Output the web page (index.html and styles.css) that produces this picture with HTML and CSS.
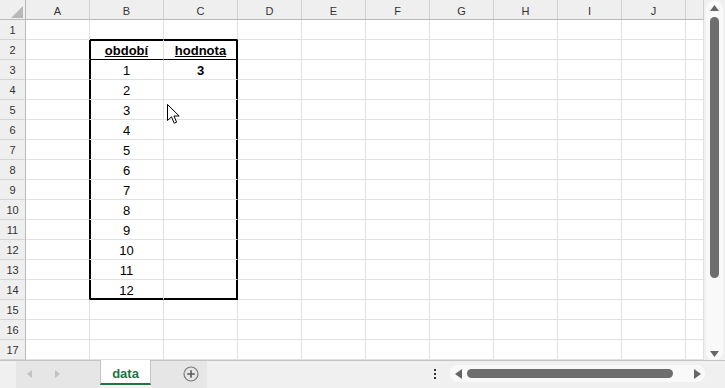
FILE: index.html
```html
<!DOCTYPE html>
<html lang="cs">
<head>
<meta charset="utf-8">
<title>data</title>
<link rel="stylesheet" href="styles.css">
</head>
<body>
<div class="app">
  <div class="main">
    <div class="sheet">
      <div class="corner"><span class="tri"></span></div><div class="ch">A</div><div class="ch">B</div><div class="ch">C</div><div class="ch">D</div><div class="ch">E</div><div class="ch">F</div><div class="ch">G</div><div class="ch">H</div><div class="ch">I</div><div class="ch">J</div><div class="ch"></div>
      <div class="rh">1</div><div class="c"></div><div class="c above"></div><div class="c above"></div><div class="c"></div><div class="c"></div><div class="c"></div><div class="c"></div><div class="c"></div><div class="c"></div><div class="c"></div><div class="c"></div>
      <div class="rh">2</div><div class="c lft"></div><div class="c hd tl">období</div><div class="c hd tr">hodnota</div><div class="c"></div><div class="c"></div><div class="c"></div><div class="c"></div><div class="c"></div><div class="c"></div><div class="c"></div><div class="c"></div>
      <div class="rh">3</div><div class="c lft"></div><div class="c l">1</div><div class="c r strong">3</div><div class="c"></div><div class="c"></div><div class="c"></div><div class="c"></div><div class="c"></div><div class="c"></div><div class="c"></div><div class="c"></div>
      <div class="rh">4</div><div class="c lft"></div><div class="c l">2</div><div class="c r"></div><div class="c"></div><div class="c"></div><div class="c"></div><div class="c"></div><div class="c"></div><div class="c"></div><div class="c"></div><div class="c"></div>
      <div class="rh">5</div><div class="c lft"></div><div class="c l">3</div><div class="c r"></div><div class="c"></div><div class="c"></div><div class="c"></div><div class="c"></div><div class="c"></div><div class="c"></div><div class="c"></div><div class="c"></div>
      <div class="rh">6</div><div class="c lft"></div><div class="c l">4</div><div class="c r"></div><div class="c"></div><div class="c"></div><div class="c"></div><div class="c"></div><div class="c"></div><div class="c"></div><div class="c"></div><div class="c"></div>
      <div class="rh">7</div><div class="c lft"></div><div class="c l">5</div><div class="c r"></div><div class="c"></div><div class="c"></div><div class="c"></div><div class="c"></div><div class="c"></div><div class="c"></div><div class="c"></div><div class="c"></div>
      <div class="rh">8</div><div class="c lft"></div><div class="c l">6</div><div class="c r"></div><div class="c"></div><div class="c"></div><div class="c"></div><div class="c"></div><div class="c"></div><div class="c"></div><div class="c"></div><div class="c"></div>
      <div class="rh">9</div><div class="c lft"></div><div class="c l">7</div><div class="c r"></div><div class="c"></div><div class="c"></div><div class="c"></div><div class="c"></div><div class="c"></div><div class="c"></div><div class="c"></div><div class="c"></div>
      <div class="rh">10</div><div class="c lft"></div><div class="c l">8</div><div class="c r"></div><div class="c"></div><div class="c"></div><div class="c"></div><div class="c"></div><div class="c"></div><div class="c"></div><div class="c"></div><div class="c"></div>
      <div class="rh">11</div><div class="c lft"></div><div class="c l">9</div><div class="c r"></div><div class="c"></div><div class="c"></div><div class="c"></div><div class="c"></div><div class="c"></div><div class="c"></div><div class="c"></div><div class="c"></div>
      <div class="rh">12</div><div class="c lft"></div><div class="c l">10</div><div class="c r"></div><div class="c"></div><div class="c"></div><div class="c"></div><div class="c"></div><div class="c"></div><div class="c"></div><div class="c"></div><div class="c"></div>
      <div class="rh">13</div><div class="c lft"></div><div class="c l">11</div><div class="c r"></div><div class="c"></div><div class="c"></div><div class="c"></div><div class="c"></div><div class="c"></div><div class="c"></div><div class="c"></div><div class="c"></div>
      <div class="rh">14</div><div class="c lft"></div><div class="c bl">12</div><div class="c br"></div><div class="c"></div><div class="c"></div><div class="c"></div><div class="c"></div><div class="c"></div><div class="c"></div><div class="c"></div><div class="c"></div>
      <div class="rh">15</div><div class="c"></div><div class="c"></div><div class="c"></div><div class="c"></div><div class="c"></div><div class="c"></div><div class="c"></div><div class="c"></div><div class="c"></div><div class="c"></div><div class="c"></div>
      <div class="rh">16</div><div class="c"></div><div class="c"></div><div class="c"></div><div class="c"></div><div class="c"></div><div class="c"></div><div class="c"></div><div class="c"></div><div class="c"></div><div class="c"></div><div class="c"></div>
      <div class="rh">17</div><div class="c"></div><div class="c"></div><div class="c"></div><div class="c"></div><div class="c"></div><div class="c"></div><div class="c"></div><div class="c"></div><div class="c"></div><div class="c"></div><div class="c"></div>
      <svg class="cursor" width="14" height="21" viewBox="0 0 14 21"><path d="M0.5 0.5 L0.5 16.5 L4.5 12.8 L7.2 19.2 L9.6 18.2 L7 12 L12.2 12 Z" fill="#fff" stroke="#000" stroke-width="1" stroke-linejoin="miter"/></svg>
    </div>
    <div class="vscroll">
      <div class="vtrack">
        <svg class="arrow" width="9" height="6" viewBox="0 0 9 6"><polygon points="4.5,0 9,6 0,6" fill="#666"/></svg>
        <div class="vthumb"></div>
        <div class="grow"></div>
        <svg class="arrow" width="9" height="6" viewBox="0 0 9 6"><polygon points="0,0 9,0 4.5,6" fill="#666"/></svg>
      </div>
    </div>
  </div>
  <div class="bar">
    <div class="lead"></div>
    <div class="nav">
      <svg width="5" height="8" viewBox="0 0 5 8"><polygon points="5,0 5,8 0,4" fill="#c2c2c2"/></svg>
      <svg width="5" height="8" viewBox="0 0 5 8"><polygon points="0,0 5,4 0,8" fill="#c2c2c2"/></svg>
    </div>
    <div class="tab">data</div>
    <div class="add">
      <svg width="16" height="16" viewBox="0 0 16 16"><circle cx="8" cy="8" r="7" fill="none" stroke="#7a7a7a" stroke-width="1.2"/><path d="M8 4.2 V11.8 M4.2 8 H11.8" stroke="#5a5a5a" stroke-width="1.6"/></svg>
    </div>
    <div class="rest">
      <div class="grow"></div>
      <div class="dots"><span class="dot"></span><span class="dot"></span><span class="dot"></span></div>
      <div class="htrack">
        <svg width="7" height="10" viewBox="0 0 7 10"><polygon points="7,0 7,10 0,5" fill="#666"/></svg>
        <div class="hthumb"></div>
        <div class="grow"></div>
        <svg width="7" height="10" viewBox="0 0 7 10"><polygon points="0,0 7,5 0,10" fill="#666"/></svg>
      </div>
    </div>
  </div>
</div>
</body>
</html>
```
FILE: styles.css
```css
* { box-sizing: border-box; }
html, body { margin: 0; padding: 0; background: #fff; }
body { font-family: "Liberation Sans", Arial, sans-serif; }

.app { width: 725px; height: 388px; display: flex; flex-direction: column; overflow: hidden; }
.main { display: flex; height: 360px; }

.sheet {
  position: relative;
  width: 704px;
  display: grid;
  grid-template-columns: 26px 64px 74px 74px repeat(7, 64px) 18px;
  grid-template-rows: repeat(18, 20px);
  background: #fff;
}

.c {
  border-right: 1px solid #e1e1e1;
  border-bottom: 1px solid #e1e1e1;
  display: flex;
  align-items: center;
  justify-content: center;
  font-size: 13px;
  color: #000;
  padding-top: 1px;
}

.corner, .ch, .rh {
  background: #efefef;
  color: #333;
  font-size: 11px;
  display: flex;
  align-items: center;
  justify-content: center;
}
.corner {
  position: relative;
  border-right: 1px solid #b8b8b8;
  border-bottom: 1px solid #b8b8b8;
}
.tri {
  width: 0; height: 0;
  border-left: 12px solid transparent;
  border-bottom: 12px solid #b8b8b8;
  margin: 5px 0 0 8px;
}
.ch {
  border-right: 1px solid #d0d0d0;
  border-bottom: 1px solid #b8b8b8;
  padding-top: 2px;
}
.rh {
  border-right: 1px solid #b8b8b8;
  border-bottom: 1px solid #d4d4d4;
  padding-top: 1px;
}

/* bordered table range B2:C14 */
.above { border-bottom-color: #000; }
.lft { border-right-color: #000; }
.hd { font-weight: bold; text-decoration: underline; border-bottom-color: #000; }
.strong { font-weight: bold; }
.tl { box-shadow: inset 1px 0 0 #000, inset 0 1px 0 #000; }
.tr { box-shadow: inset -1px 0 0 #000, inset 0 1px 0 #000; border-right-color: #000; }
.l { box-shadow: inset 1px 0 0 #000; }
.r { box-shadow: inset -1px 0 0 #000; border-right-color: #000; }
.bl { box-shadow: inset 1px 0 0 #000, inset 0 -1px 0 #000; border-bottom-color: #000; }
.br { box-shadow: inset -1px 0 0 #000, inset 0 -1px 0 #000; border-right-color: #000; border-bottom-color: #000; }

.cursor { position: absolute; left: 167px; top: 104px; }

.vscroll {
  width: 21px;
  background: #f0f0f0;
  display: flex;
  padding: 1px 2px 0 2px;
}
.vtrack {
  flex: 1;
  background: #f9f9f9;
  border-radius: 8px 8px 8px 8px;
  display: flex;
  flex-direction: column;
  align-items: center;
  padding: 4px 0 3px 0;
}
.vthumb {
  width: 9px;
  height: 261px;
  margin-top: 6px;
  background: #6e6e6e;
  border-radius: 5px;
}
.grow { flex: 1; }

.bar {
  height: 28px;
  display: flex;
  background: #f0f0f0;
}
.lead { width: 16px; border-top: 1px solid #c4c4c4; }
.nav {
  width: 84px;
  background: #e6e6e6;
  border-top: 1px solid #c4c4c4;
  display: flex;
  align-items: center;
  padding: 0 0 2px 11px;
  gap: 23px;
}
.tab {
  width: 51px;
  height: 25px;
  background: #fff;
  border-left: 1px solid #c4c4c4;
  border-right: 1px solid #c4c4c4;
  border-bottom: 2px solid #217346;
  color: #217346;
  font-weight: bold;
  font-size: 13px;
  display: flex;
  align-items: center;
  justify-content: center;
  padding-top: 3px;
}
.add {
  width: 56px;
  background: #e6e6e6;
  border-top: 1px solid #c4c4c4;
  display: flex;
  align-items: center;
  padding: 0 0 1px 32px;
}
.rest {
  flex: 1;
  display: flex;
  align-items: center;
  border-top: 1px solid #c4c4c4;
  padding-right: 20px;
}
.dots {
  width: 10px;
  margin-right: 10px;
  display: flex;
  flex-direction: column;
  align-items: center;
  gap: 2px;
  margin-top: -1px;
}
.dot { width: 2px; height: 2px; background: #333; }
.htrack {
  width: 255px;
  height: 17px;
  background: #f9f9f9;
  border-radius: 8px;
  display: flex;
  align-items: center;
  padding: 0 4px 0 5px;
  margin-top: -2px;
}
.hthumb {
  width: 206px;
  height: 9px;
  margin-left: 5px;
  background: #6e6e6e;
  border-radius: 5px;
}
```
